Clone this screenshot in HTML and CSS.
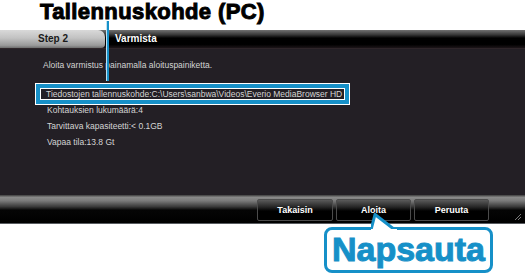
FILE: index.html
```html
<!DOCTYPE html>
<html lang="fi">
<head>
  <meta charset="UTF-8" />
  <title>Varmista</title>
  <link rel="stylesheet" href="styles.css">
</head>
<body>
<div class="page">
  <!-- Caption above the window -->
  <h1 class="caption">Tallennuskohde (PC)</h1>

  <!-- Dialog window -->
  <div class="window">
    <div class="titlebar">
      <div class="tab">Step 2</div>
      <div class="title">Varmista</div>
    </div>
    <div class="content">
      <p class="intro">Aloita varmistus painamalla aloituspainiketta.</p>
      <p class="highlight">Tiedostojen tallennuskohde:C:\Users\sanbwa\Videos\Everio MediaBrowser HD</p>
      <p class="line">Kohtauksien lukumäärä:4</p>
      <p class="line">Tarvittava kapasiteetti:&lt; 0.1GB</p>
      <p class="line">Vapaa tila:13.8 Gt</p>
    </div>
    <div class="buttonbar">
      <button class="btn btn-back">Takaisin</button>
      <button class="btn btn-start">Aloita</button>
      <button class="btn btn-cancel">Peruuta</button>
      <svg class="grip" width="8" height="8" viewBox="0 0 8 8">
        <path d="M7 1 L1 7 M7 4 L4 7" stroke="#777" stroke-width="1" />
      </svg>
    </div>
  </div>

  <!-- Callout line from caption to highlighted row -->
  <span class="pointer-line"></span>

  <!-- Click bubble -->
  <div class="bubble">
    <svg class="tail" width="28" height="18" viewBox="0 0 28 18">
      <path d="M0 17 L4 1.5 L24 17" fill="#fff" stroke="#1690c8" stroke-width="3" stroke-linejoin="round" />
      <rect x="0" y="16" width="26" height="2" fill="#fff" />
    </svg>
    <span class="bubble-text">Napsauta</span>
  </div>
</div>
</body>
</html>
```

FILE: styles.css
```css
/* Global */
body {
  margin: 0;
  padding: 0;
  background: #fff;
  font-family: "Liberation Sans", Arial, sans-serif;
}
.page {
  position: relative;
  width: 525px;
  height: 273px;
  overflow: hidden;
}
/* Caption */
.caption {
  margin: 0;
  height: 30px;
  padding-left: 40px;
  box-sizing: border-box;
  font-size: 22px;
  line-height: 24px;
  font-weight: bold;
  color: #000;
  -webkit-text-stroke: 1px #000;
  letter-spacing: 0.4px;
}
/* Window */
.window {
  background: #231f25;
}
.titlebar {
  display: flex;
  height: 18px;
  background: linear-gradient(#717171 0, #3a3a3a 25%, #000 45%, #000 80%, #1c1518 100%);
}
.tab {
  width: 105px;
  box-sizing: border-box;
  padding-left: 38px;
  font-size: 10px;
  font-weight: bold;
  line-height: 17px;
  color: #1a1a1a;
  background: linear-gradient(#d9d9d9, #c2c2c2 45%, #9a9a9a 85%, #6e6e6e);
  border-radius: 0 7px 4px 0;
}
.title {
  padding-left: 10px;
  font-size: 10px;
  font-weight: bold;
  line-height: 17px;
  color: #fff;
}
.content {
  height: 147px;
  box-sizing: border-box;
  padding-top: 10px;
  border-top: 1px solid #2e2529;
  display: flex;
  flex-direction: column;
  align-items: flex-start;
  font-size: 8.5px;
  color: #d4d4d4;
}
.content p {
  margin: 0;
  line-height: 12px;
}
.content .intro {
  padding-left: 43px;
}
.content .line {
  padding-left: 47px;
  margin-bottom: 4px;
}
.content .highlight {
  margin: 12px 0 -1px 35px;
  width: 315px;
  height: 22px;
  box-sizing: border-box;
  border: 1px solid #fff;
  box-shadow: inset 0 0 0 4px #1690c8, inset 0 0 0 5px #fff;
  padding-left: 10px;
  line-height: 20px;
}
/* Button bar */
.buttonbar {
  position: relative;
  display: flex;
  justify-content: flex-end;
  gap: 3px;
  height: 29px;
  box-sizing: border-box;
  padding: 4px 36px 0 0;
  background: linear-gradient(#3c3c3c 0, #8a8a8a 8%, #7a7a7a 20%, #3a3a3a 40%, #050505 52%, #000 96%, #9aa0a8 100%);
}
.btn {
  width: 76px;
  height: 22px;
  padding: 0;
  border: 1px solid #4b4b4b;
  border-radius: 2px;
  background: linear-gradient(#5a5a5a, #262626 35%, #000 55%, #000);
  color: #fff;
  font-family: "Liberation Sans", Arial, sans-serif;
  font-size: 9px;
  font-weight: bold;
  line-height: 18px;
}
.btn-start,
.btn-cancel {
  width: 75px;
}
.grip {
  position: absolute;
  right: 3px;
  bottom: 3px;
}
/* Callout pointer */
.pointer-line {
  position: absolute;
  left: 106px;
  top: 21px;
  width: 2px;
  height: 60px;
  background: #1690c8;
  border-left: 1px solid #bfe2f2;
}
/* Bubble */
.bubble {
  position: relative;
  margin: 3px 0 0 324px;
  width: 169px;
  height: 46px;
  box-sizing: border-box;
  border: 3px solid #1690c8;
  border-radius: 8px;
  background: #fff;
  text-align: center;
}
.tail {
  position: absolute;
  left: 44px;
  top: -17px;
}
.bubble-text {
  display: block;
  font-size: 34px;
  font-weight: bold;
  line-height: 38px;
  color: #1690c8;
  -webkit-text-stroke: 1px #1690c8;
}
```
